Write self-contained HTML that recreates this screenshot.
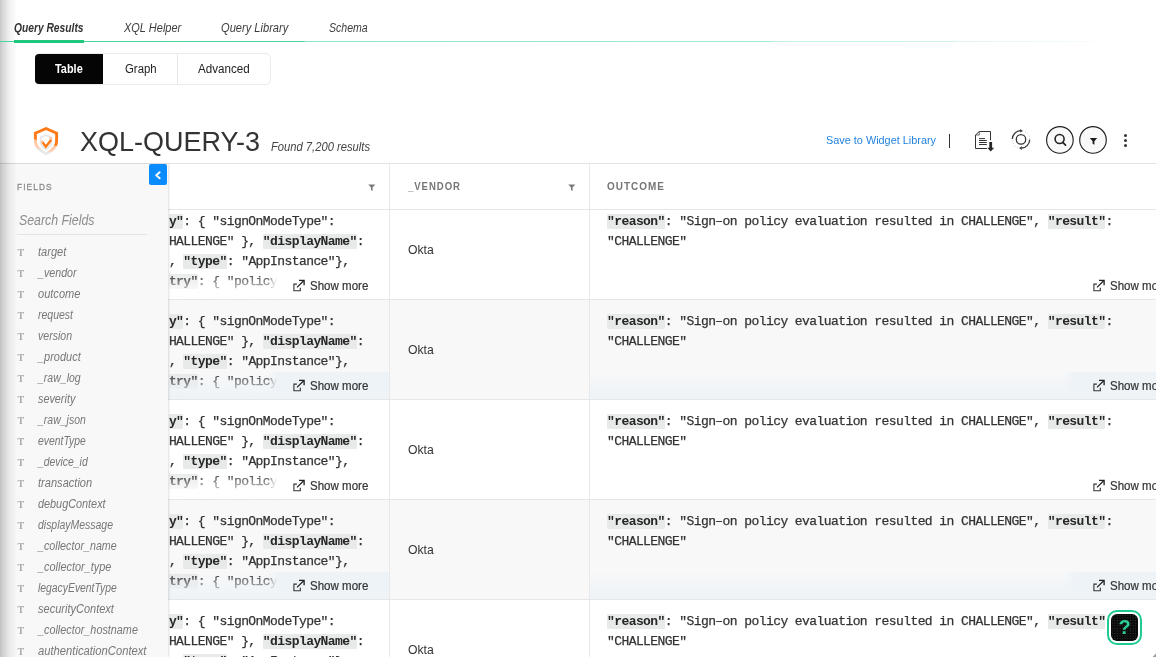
<!DOCTYPE html>
<html>
<head>
<meta charset="utf-8">
<title>XQL Query</title>
<style>
    *{box-sizing:border-box;margin:0;padding:0}
    html,body{width:1156px;height:657px;overflow:hidden;background:#fff;font-family:"Liberation Sans",sans-serif;color:#333}
    body{position:relative}
#wrap{left:0;top:0;width:1156px;height:657px;will-change:transform}
    .a{position:absolute}
    .x{display:inline-block;transform-origin:0 50%;white-space:nowrap}
    #edge{left:0;top:0;width:18px;height:657px;background:linear-gradient(to right,rgba(0,0,0,.225) 0,rgba(0,0,0,.20) 1px,rgba(0,0,0,.17) 2px,rgba(0,0,0,.14) 4px,rgba(0,0,0,.11) 6px,rgba(0,0,0,.07) 8px,rgba(0,0,0,.045) 11px,rgba(0,0,0,.025) 14px,rgba(0,0,0,0) 17px);z-index:50}
    .tab{top:20px;font-size:12px;font-style:italic;color:#3c3c3c;white-space:nowrap;line-height:16px}
    #tabline{left:0;top:41px;width:1115px;height:1px;background:linear-gradient(to right,#45d49b 0,#4fd7a1 304px,#8be7c4 306px,#a2ecd1 772px,#c4f2e2 774px,#cdf4e7 955px,#e0f8f0 957px,#f4fcf9 1080px,#fff 1115px);z-index:60}
    #tabactive{left:14px;top:40px;width:70px;height:3px;background:#1fc77f;z-index:61}
    #seg{left:35px;top:53px;width:236px;height:32px;border:1px solid #ebebeb;border-radius:5px;background:#fff}
    .segb{top:54px;height:30px;font-size:12px;line-height:30px;color:#222;white-space:nowrap}
    #title{left:80px;top:123.5px;font-size:28px;line-height:36px;color:#333;white-space:nowrap}
    #found{left:271px;top:139px;font-size:12px;font-style:italic;color:#444;white-space:nowrap;line-height:16px}
    #save{left:826px;top:131.6px;font-size:11px;color:#2383de;white-space:nowrap;line-height:16px}
    #hline{left:0;top:163px;width:1156px;height:1px;background:#e4e4e4}
    #side{left:0;top:164px;width:168px;height:493px;background:#f8f8f8;box-shadow:1px 0 2px rgba(0,0,0,.13);z-index:20}
    #tog{left:149px;top:164px;width:18px;height:21px;background:#0a8cff;border-radius:2px;z-index:25}
    #fields{left:17px;top:181.2px;font-size:9.5px;color:#8a8a8a;-webkit-text-stroke:0.3px #8a8a8a;line-height:12px;z-index:22;white-space:nowrap}
    #search{left:19px;top:211px;font-size:14px;font-style:italic;color:#8c8c8c;line-height:18px;z-index:22;white-space:nowrap}
    #sline{left:17px;top:234px;width:130px;height:1px;background:#e3e3e3;z-index:22}
    .f{left:38.2px;font-size:12px;font-style:italic;color:#777;line-height:14px;z-index:22;white-space:nowrap}
    .t{left:17.5px;font-family:"Liberation Serif",serif;font-size:10px;font-weight:bold;color:#a9a9a9;line-height:12px;z-index:22}
    .hdr{top:181px;font-size:10px;font-weight:bold;color:#767676;line-height:12px;white-space:nowrap}
    .vl{top:164px;width:1px;height:493px;background:#e9e9e9;z-index:9}
    .hl{left:168px;width:988px;height:1px;background:#e6e6e6;z-index:9}
    .rowbg{left:168px;width:988px;height:100px;background:#f8f8f9}
    
.mono{-webkit-text-stroke:0.25px #333;font-family:"Liberation Mono",monospace;font-size:13px;letter-spacing:-0.577px;line-height:20px;color:#333;white-space:pre;z-index:3}
    .mono b{-webkit-text-stroke:0;background:#e8e9e9;color:#262626;border-radius:1px;padding:0;box-decoration-break:clone}
    .fade{}
    .fade b{}
    .okta{left:407.5px;font-size:12px;color:#333;line-height:16px;white-space:nowrap}
    .sm{-webkit-text-stroke:0.2px #333;font-size:12px;color:#333;line-height:16px;white-space:nowrap;z-index:8}
    .ov{z-index:6}
    </style>
</head>
<body>
<div id="wrap" class="a">
<div id="edge" class="a"></div>
<div class="a tab" style="left:14px;font-weight:bold;color:#333"><span class="x" style="transform:scaleX(0.8541)">Query Results</span></div>
<div class="a tab" style="left:124px"><span class="x" style="transform:scaleX(0.9154)">XQL Helper</span></div>
<div class="a tab" style="left:221.4px"><span class="x" style="transform:scaleX(0.9257)">Query Library</span></div>
<div class="a tab" style="left:329.2px"><span class="x" style="transform:scaleX(0.8789)">Schema</span></div>
<div id="tabline" class="a"></div><div id="tabactive" class="a"></div>
<div id="seg" class="a"></div>
<div class="a" style="left:35px;top:54px;width:68px;height:30px;background:#050505;border-radius:4px 0 0 4px"></div>
<div class="a segb" style="left:55.3px;color:#fff;font-weight:bold"><span class="x" style="transform:scaleX(0.9096)">Table</span></div>
<div class="a segb" style="left:124.5px"><span class="x" style="transform:scaleX(0.9473)">Graph</span></div>
<div class="a" style="left:177px;top:54px;width:1px;height:30px;background:#e8e8e8"></div>
<div class="a segb" style="left:197.8px"><span class="x" style="transform:scaleX(0.9686)">Advanced</span></div>
<div id="title" class="a"><span class="x" style="transform:scaleX(0.9639)">XQL-QUERY-3</span></div>
<div id="found" class="a"><span class="x" style="transform:scaleX(0.9333)">Found 7,200 results</span></div>
<div id="save" class="a"><span class="x" style="transform:scaleX(0.9885)">Save to Widget Library</span></div>
<div class="a" style="left:949px;top:134px;width:1px;height:14px;background:#333"></div>
<svg class="a" style="left:30px;top:124px" width="34" height="34" viewBox="30 124 34 34"><defs><linearGradient id="sg" gradientUnits="userSpaceOnUse" x1="46" y1="127" x2="38.15" y2="152.6"><stop offset="0" stop-color="#ff7a17"/><stop offset="0.555" stop-color="#ff7a17"/><stop offset="0.575" stop-color="#ffc6a0"/><stop offset="0.83" stop-color="#ffcdb0"/><stop offset="0.86" stop-color="#e6e6e6"/><stop offset="1" stop-color="#ededed"/></linearGradient></defs><path d="M46 128.5 L56.6 133.1 V141.5 C56.6 146 51.5 151 46 154 C40.5 151 35.4 146 35.4 141.5 V133.1 Z" fill="#fff" stroke="url(#sg)" stroke-width="2.9" stroke-linejoin="miter"/><path d="M46 135.2 L51.4 137.4 V141.4 C51.4 145 48.8 147.8 46 149.4 C43.2 147.8 40.6 145 40.6 141.4 V137.4 Z" fill="none" stroke="#e6e6e6" stroke-width="1.6"/><rect x="49.4" y="137" width="2.6" height="3.2" fill="#ffc6a0"/><path d="M41.9 141.4 L45.8 146.7 L51.1 140" fill="none" stroke="#ff7a17" stroke-width="2.4"/><path d="M40.4 141.9 L42.3 139.9 L43.6 141.6 L41.8 143.4 Z" fill="#ffc6a0"/></svg>
<svg class="a" style="left:972px;top:128px" width="26" height="26" viewBox="972 128 26 26"><path d="M990.5 140.2 V131.5 H979.3 L975.5 135 V148.5 H987" fill="none" stroke="#333" stroke-width="1"/><path d="M979.3 131.5 V135 H975.5" fill="none" stroke="#333" stroke-width="0.7"/><path d="M979 138.6 H985 M979 140.5 H986.8 M979 142.5 H986.8 M979 144.5 H986.8" stroke="#333" stroke-width="1"/><path d="M989.3 142 H992.1 V147.8 H994.2 L990.7 151.5 L987.3 147.8 H989.3 Z" fill="#262626"/></svg>
<svg class="a" style="left:1008px;top:126px" width="26" height="26" viewBox="1008 126 26 26"><circle cx="1021" cy="139.4" r="4.7" fill="none" stroke="#333" stroke-width="1.3"/><circle cx="1021" cy="139.4" r="8.7" fill="none" stroke="#bdbdbd" stroke-width="0.9" stroke-dasharray="1 1.8"/><path d="M1012.3 139 A8.7 8.7 0 0 1 1020.6 130.7" fill="none" stroke="#333" stroke-width="1.2"/><path d="M1020.2 129 L1022.8 130.9 L1020.2 132.6 Z" fill="#333"/><path d="M1029.7 139.8 A8.7 8.7 0 0 1 1021.4 148.1" fill="none" stroke="#333" stroke-width="1.2"/><path d="M1021.8 146.2 L1019.2 148.1 L1021.8 149.9 Z" fill="#333"/></svg>
<svg class="a" style="left:1044px;top:124px" width="66" height="32" viewBox="1044 124 66 32"><circle cx="1059.9" cy="139.9" r="13.3" fill="#f9f9f9" stroke="#222" stroke-width="1.15"/><circle cx="1059.6" cy="139" r="4.5" fill="none" stroke="#222" stroke-width="1.6"/><path d="M1062.8 142.4 L1065.5 145.2" stroke="#222" stroke-width="1.7" stroke-linecap="round"/><circle cx="1093" cy="139.9" r="13.3" fill="#f9f9f9" stroke="#222" stroke-width="1.15"/><path d="M1089.8 137.9 H1097.2 L1094.4 141.2 V144.8 L1092.6 143.8 V141.2 Z" fill="#1c1c1c"/></svg>
<svg class="a" style="left:1122px;top:132px" width="8" height="16" viewBox="1122 132 8 16"><circle cx="1125.5" cy="135.6" r="1.5" fill="#333"/><circle cx="1125.5" cy="140.5" r="1.5" fill="#333"/><circle cx="1125.5" cy="145.5" r="1.5" fill="#333"/></svg>
<div id="hline" class="a"></div>
<div id="side" class="a"></div>
<div id="tog" class="a"><svg width="18" height="21" viewBox="0 0 18 21"><path d="M10.7 8.3 L7.2 11.3 L10.7 14.3" fill="none" stroke="#fff" stroke-width="1.9" stroke-linecap="round" stroke-linejoin="round"/></svg></div>
<div id="fields" class="a"><span class="x" style="transform:scaleX(0.8756);letter-spacing:1.25px">FIELDS</span></div>
<div id="search" class="a"><span class="x" style="transform:scaleX(0.8821)">Search Fields</span></div>
<div id="sline" class="a"></div>
<div class="a t" style="top:246.5px">T</div><div class="a f" style="top:245px"><span class="x" style="transform:scaleX(0.9222)">target</span></div>
<div class="a t" style="top:267.5px">T</div><div class="a f" style="top:266px"><span class="x" style="transform:scaleX(0.8899)">_vendor</span></div>
<div class="a t" style="top:288.5px">T</div><div class="a f" style="top:287px"><span class="x" style="transform:scaleX(0.9211)">outcome</span></div>
<div class="a t" style="top:309.5px">T</div><div class="a f" style="top:308px"><span class="x" style="transform:scaleX(0.8743)">request</span></div>
<div class="a t" style="top:330.5px">T</div><div class="a f" style="top:329px"><span class="x" style="transform:scaleX(0.8814)">version</span></div>
<div class="a t" style="top:351.5px">T</div><div class="a f" style="top:350px"><span class="x" style="transform:scaleX(0.9143)">_product</span></div>
<div class="a t" style="top:372.5px">T</div><div class="a f" style="top:371px"><span class="x" style="transform:scaleX(0.8767)">_raw_log</span></div>
<div class="a t" style="top:393.5px">T</div><div class="a f" style="top:392px"><span class="x" style="transform:scaleX(0.9022)">severity</span></div>
<div class="a t" style="top:414.5px">T</div><div class="a f" style="top:413px"><span class="x" style="transform:scaleX(0.8738)">_raw_json</span></div>
<div class="a t" style="top:435.5px">T</div><div class="a f" style="top:434px"><span class="x" style="transform:scaleX(0.8666)">eventType</span></div>
<div class="a t" style="top:456.5px">T</div><div class="a f" style="top:455px"><span class="x" style="transform:scaleX(0.8662)">_device_id</span></div>
<div class="a t" style="top:477.5px">T</div><div class="a f" style="top:476px"><span class="x" style="transform:scaleX(0.9233)">transaction</span></div>
<div class="a t" style="top:498.5px">T</div><div class="a f" style="top:497px"><span class="x" style="transform:scaleX(0.9045)">debugContext</span></div>
<div class="a t" style="top:519.5px">T</div><div class="a f" style="top:518px"><span class="x" style="transform:scaleX(0.8716)">displayMessage</span></div>
<div class="a t" style="top:540.5px">T</div><div class="a f" style="top:539px"><span class="x" style="transform:scaleX(0.8948)">_collector_name</span></div>
<div class="a t" style="top:561.5px">T</div><div class="a f" style="top:560px"><span class="x" style="transform:scaleX(0.9093)">_collector_type</span></div>
<div class="a t" style="top:582.5px">T</div><div class="a f" style="top:581px"><span class="x" style="transform:scaleX(0.8643)">legacyEventType</span></div>
<div class="a t" style="top:603.5px">T</div><div class="a f" style="top:602px"><span class="x" style="transform:scaleX(0.9177)">securityContext</span></div>
<div class="a t" style="top:624.5px">T</div><div class="a f" style="top:623px"><span class="x" style="transform:scaleX(0.9022)">_collector_hostname</span></div>
<div class="a t" style="top:645.5px">T</div><div class="a f" style="top:644px"><span class="x" style="transform:scaleX(0.9346)">authenticationContext</span></div>
<div class="a vl" style="left:389px"></div><div class="a vl" style="left:589px"></div>
<div class="a hdr" style="left:407.5px"><span class="x" style="transform:scaleX(0.9566);letter-spacing:1.0px">_VENDOR</span></div>
<div class="a hdr" style="left:607px"><span class="x" style="transform:scaleX(0.9946);letter-spacing:1.0px">OUTCOME</span></div>
<svg class="a" style="left:368px;top:184px" width="8" height="8" viewBox="0 0 8 8"><path d="M0.3 0.4 H7.3 L4.6 3.6 V6.9 L3 6.1 V3.6 Z" fill="#7b7b7b"/></svg>
<svg class="a" style="left:568px;top:184px" width="8" height="8" viewBox="0 0 8 8"><path d="M0.3 0.4 H7.3 L4.6 3.6 V6.9 L3 6.1 V3.6 Z" fill="#7b7b7b"/></svg>
<div class="a hl" style="top:209px"></div>
<div class="a" style="left:168px;top:210px;width:221px;height:89px;overflow:hidden;z-index:3"><div class="a mono" style="left:0.9px;top:1.5px"><b>y"</b>: { "signOnModeType":
HALLENGE" }, <b>"displayName"</b>:
, <b>"type"</b>: "AppInstance"},
<b>try"</b>: { "policyEvaluation"
"FactorMode": "1FA",</div></div>
<div class="a okta" style="top:241.5px"><span class="x" style="transform:scaleX(1.018)">Okta</span></div>
<div class="a mono" style="left:607px;top:211.5px"><b>"reason"</b>: "Sign–on policy evaluation resulted in CHALLENGE", <b>"result"</b>:
"CHALLENGE"</div>
<div class="a ov" style="left:168px;top:272px;width:221px;height:27px;background:linear-gradient(to bottom,rgba(255,255,255,0) 0,rgba(255,255,255,1) 25px)"></div>
<div class="a ov" style="left:590px;top:272px;width:566px;height:27px;background:linear-gradient(to bottom,rgba(255,255,255,0) 0,rgba(255,255,255,1) 25px)"></div>
<div class="a ov" style="left:268.3px;top:272px;width:120.7px;height:27px;background:linear-gradient(to right,rgba(255,255,255,0) 0,rgba(255,255,255,1) 9px)"></div>
<div class="a ov" style="left:1064px;top:272px;width:92px;height:27px;background:linear-gradient(to right,rgba(255,255,255,0) 0,rgba(255,255,255,1) 11px)"></div>
<div class="a sm" style="left:293px;top:277.5px;width:100px"><svg width="13" height="13" viewBox="0 0 13 13" style="position:absolute;left:0;top:1px"><path d="M3.9 5.1 H0.9 V11.7 H7.3 V8.7" fill="none" stroke="#333" stroke-width="1.1"/><path d="M4 8.4 L10.9 1.5" fill="none" stroke="#222" stroke-width="1.3"/><path d="M6 1.4 H11.1 V6.2" fill="none" stroke="#222" stroke-width="1.3"/></svg><span style="position:absolute;left:17.1px;top:0"><span class="x" style="transform:scaleX(0.9604)">Show more</span></span></div>
<div class="a sm" style="left:1093.2px;top:277.5px;width:100px"><svg width="13" height="13" viewBox="0 0 13 13" style="position:absolute;left:0;top:1px"><path d="M3.9 5.1 H0.9 V11.7 H7.3 V8.7" fill="none" stroke="#333" stroke-width="1.1"/><path d="M4 8.4 L10.9 1.5" fill="none" stroke="#222" stroke-width="1.3"/><path d="M6 1.4 H11.1 V6.2" fill="none" stroke="#222" stroke-width="1.3"/></svg><span style="position:absolute;left:17.1px;top:0"><span class="x" style="transform:scaleX(0.9604)">Show more</span></span></div>
<div class="a hl" style="top:299px"></div>
<div class="a rowbg" style="top:300px;height:99px"></div>
<div class="a" style="left:168px;top:310px;width:221px;height:89px;overflow:hidden;z-index:3"><div class="a mono" style="left:0.9px;top:1.5px"><b>y"</b>: { "signOnModeType":
HALLENGE" }, <b>"displayName"</b>:
, <b>"type"</b>: "AppInstance"},
<b>try"</b>: { "policyEvaluation"
"FactorMode": "1FA",</div></div>
<div class="a okta" style="top:341.5px"><span class="x" style="transform:scaleX(1.018)">Okta</span></div>
<div class="a mono" style="left:607px;top:311.5px"><b>"reason"</b>: "Sign–on policy evaluation resulted in CHALLENGE", <b>"result"</b>:
"CHALLENGE"</div>
<div class="a ov" style="left:168px;top:372px;width:221px;height:27px;background:linear-gradient(to bottom,rgba(238,243,247,0) 0,rgba(238,243,247,1) 25px)"></div>
<div class="a ov" style="left:590px;top:372px;width:566px;height:27px;background:linear-gradient(to bottom,rgba(238,243,247,0) 0,rgba(238,243,247,1) 25px)"></div>
<div class="a ov" style="left:268.3px;top:372px;width:120.7px;height:27px;background:linear-gradient(to right,rgba(238,243,247,0) 0,rgba(238,243,247,1) 9px)"></div>
<div class="a ov" style="left:1064px;top:372px;width:92px;height:27px;background:linear-gradient(to right,rgba(238,243,247,0) 0,rgba(238,243,247,1) 11px)"></div>
<div class="a sm" style="left:293px;top:377.5px;width:100px"><svg width="13" height="13" viewBox="0 0 13 13" style="position:absolute;left:0;top:1px"><path d="M3.9 5.1 H0.9 V11.7 H7.3 V8.7" fill="none" stroke="#333" stroke-width="1.1"/><path d="M4 8.4 L10.9 1.5" fill="none" stroke="#222" stroke-width="1.3"/><path d="M6 1.4 H11.1 V6.2" fill="none" stroke="#222" stroke-width="1.3"/></svg><span style="position:absolute;left:17.1px;top:0"><span class="x" style="transform:scaleX(0.9604)">Show more</span></span></div>
<div class="a sm" style="left:1093.2px;top:377.5px;width:100px"><svg width="13" height="13" viewBox="0 0 13 13" style="position:absolute;left:0;top:1px"><path d="M3.9 5.1 H0.9 V11.7 H7.3 V8.7" fill="none" stroke="#333" stroke-width="1.1"/><path d="M4 8.4 L10.9 1.5" fill="none" stroke="#222" stroke-width="1.3"/><path d="M6 1.4 H11.1 V6.2" fill="none" stroke="#222" stroke-width="1.3"/></svg><span style="position:absolute;left:17.1px;top:0"><span class="x" style="transform:scaleX(0.9604)">Show more</span></span></div>
<div class="a hl" style="top:399px"></div>
<div class="a" style="left:168px;top:410px;width:221px;height:89px;overflow:hidden;z-index:3"><div class="a mono" style="left:0.9px;top:1.5px"><b>y"</b>: { "signOnModeType":
HALLENGE" }, <b>"displayName"</b>:
, <b>"type"</b>: "AppInstance"},
<b>try"</b>: { "policyEvaluation"
"FactorMode": "1FA",</div></div>
<div class="a okta" style="top:441.5px"><span class="x" style="transform:scaleX(1.018)">Okta</span></div>
<div class="a mono" style="left:607px;top:411.5px"><b>"reason"</b>: "Sign–on policy evaluation resulted in CHALLENGE", <b>"result"</b>:
"CHALLENGE"</div>
<div class="a ov" style="left:168px;top:472px;width:221px;height:27px;background:linear-gradient(to bottom,rgba(255,255,255,0) 0,rgba(255,255,255,1) 25px)"></div>
<div class="a ov" style="left:590px;top:472px;width:566px;height:27px;background:linear-gradient(to bottom,rgba(255,255,255,0) 0,rgba(255,255,255,1) 25px)"></div>
<div class="a ov" style="left:268.3px;top:472px;width:120.7px;height:27px;background:linear-gradient(to right,rgba(255,255,255,0) 0,rgba(255,255,255,1) 9px)"></div>
<div class="a ov" style="left:1064px;top:472px;width:92px;height:27px;background:linear-gradient(to right,rgba(255,255,255,0) 0,rgba(255,255,255,1) 11px)"></div>
<div class="a sm" style="left:293px;top:477.5px;width:100px"><svg width="13" height="13" viewBox="0 0 13 13" style="position:absolute;left:0;top:1px"><path d="M3.9 5.1 H0.9 V11.7 H7.3 V8.7" fill="none" stroke="#333" stroke-width="1.1"/><path d="M4 8.4 L10.9 1.5" fill="none" stroke="#222" stroke-width="1.3"/><path d="M6 1.4 H11.1 V6.2" fill="none" stroke="#222" stroke-width="1.3"/></svg><span style="position:absolute;left:17.1px;top:0"><span class="x" style="transform:scaleX(0.9604)">Show more</span></span></div>
<div class="a sm" style="left:1093.2px;top:477.5px;width:100px"><svg width="13" height="13" viewBox="0 0 13 13" style="position:absolute;left:0;top:1px"><path d="M3.9 5.1 H0.9 V11.7 H7.3 V8.7" fill="none" stroke="#333" stroke-width="1.1"/><path d="M4 8.4 L10.9 1.5" fill="none" stroke="#222" stroke-width="1.3"/><path d="M6 1.4 H11.1 V6.2" fill="none" stroke="#222" stroke-width="1.3"/></svg><span style="position:absolute;left:17.1px;top:0"><span class="x" style="transform:scaleX(0.9604)">Show more</span></span></div>
<div class="a hl" style="top:499px"></div>
<div class="a rowbg" style="top:500px;height:99px"></div>
<div class="a" style="left:168px;top:510px;width:221px;height:89px;overflow:hidden;z-index:3"><div class="a mono" style="left:0.9px;top:1.5px"><b>y"</b>: { "signOnModeType":
HALLENGE" }, <b>"displayName"</b>:
, <b>"type"</b>: "AppInstance"},
<b>try"</b>: { "policyEvaluation"
"FactorMode": "1FA",</div></div>
<div class="a okta" style="top:541.5px"><span class="x" style="transform:scaleX(1.018)">Okta</span></div>
<div class="a mono" style="left:607px;top:511.5px"><b>"reason"</b>: "Sign–on policy evaluation resulted in CHALLENGE", <b>"result"</b>:
"CHALLENGE"</div>
<div class="a ov" style="left:168px;top:572px;width:221px;height:27px;background:linear-gradient(to bottom,rgba(238,243,247,0) 0,rgba(238,243,247,1) 25px)"></div>
<div class="a ov" style="left:590px;top:572px;width:566px;height:27px;background:linear-gradient(to bottom,rgba(238,243,247,0) 0,rgba(238,243,247,1) 25px)"></div>
<div class="a ov" style="left:268.3px;top:572px;width:120.7px;height:27px;background:linear-gradient(to right,rgba(238,243,247,0) 0,rgba(238,243,247,1) 9px)"></div>
<div class="a ov" style="left:1064px;top:572px;width:92px;height:27px;background:linear-gradient(to right,rgba(238,243,247,0) 0,rgba(238,243,247,1) 11px)"></div>
<div class="a sm" style="left:293px;top:577.5px;width:100px"><svg width="13" height="13" viewBox="0 0 13 13" style="position:absolute;left:0;top:1px"><path d="M3.9 5.1 H0.9 V11.7 H7.3 V8.7" fill="none" stroke="#333" stroke-width="1.1"/><path d="M4 8.4 L10.9 1.5" fill="none" stroke="#222" stroke-width="1.3"/><path d="M6 1.4 H11.1 V6.2" fill="none" stroke="#222" stroke-width="1.3"/></svg><span style="position:absolute;left:17.1px;top:0"><span class="x" style="transform:scaleX(0.9604)">Show more</span></span></div>
<div class="a sm" style="left:1093.2px;top:577.5px;width:100px"><svg width="13" height="13" viewBox="0 0 13 13" style="position:absolute;left:0;top:1px"><path d="M3.9 5.1 H0.9 V11.7 H7.3 V8.7" fill="none" stroke="#333" stroke-width="1.1"/><path d="M4 8.4 L10.9 1.5" fill="none" stroke="#222" stroke-width="1.3"/><path d="M6 1.4 H11.1 V6.2" fill="none" stroke="#222" stroke-width="1.3"/></svg><span style="position:absolute;left:17.1px;top:0"><span class="x" style="transform:scaleX(0.9604)">Show more</span></span></div>
<div class="a hl" style="top:599px"></div>
<div class="a" style="left:168px;top:610px;width:221px;height:89px;overflow:hidden;z-index:3"><div class="a mono" style="left:0.9px;top:1.5px"><b>y"</b>: { "signOnModeType":
HALLENGE" }, <b>"displayName"</b>:
, <b>"type"</b>: "AppInstance"},
<b>try"</b>: { "policyEvaluation"
"FactorMode": "1FA",</div></div>
<div class="a okta" style="top:641.5px"><span class="x" style="transform:scaleX(1.018)">Okta</span></div>
<div class="a mono" style="left:607px;top:611.5px"><b>"reason"</b>: "Sign–on policy evaluation resulted in CHALLENGE", <b>"result"</b>:
"CHALLENGE"</div>
<div class="a ov" style="left:168px;top:672px;width:221px;height:27px;background:linear-gradient(to bottom,rgba(255,255,255,0) 0,rgba(255,255,255,1) 25px)"></div>
<div class="a ov" style="left:590px;top:672px;width:566px;height:27px;background:linear-gradient(to bottom,rgba(255,255,255,0) 0,rgba(255,255,255,1) 25px)"></div>
<div class="a ov" style="left:268.3px;top:672px;width:120.7px;height:27px;background:linear-gradient(to right,rgba(255,255,255,0) 0,rgba(255,255,255,1) 9px)"></div>
<div class="a ov" style="left:1064px;top:672px;width:92px;height:27px;background:linear-gradient(to right,rgba(255,255,255,0) 0,rgba(255,255,255,1) 11px)"></div>
<div class="a sm" style="left:293px;top:677.5px;width:100px"><svg width="13" height="13" viewBox="0 0 13 13" style="position:absolute;left:0;top:1px"><path d="M3.9 5.1 H0.9 V11.7 H7.3 V8.7" fill="none" stroke="#333" stroke-width="1.1"/><path d="M4 8.4 L10.9 1.5" fill="none" stroke="#222" stroke-width="1.3"/><path d="M6 1.4 H11.1 V6.2" fill="none" stroke="#222" stroke-width="1.3"/></svg><span style="position:absolute;left:17.1px;top:0"><span class="x" style="transform:scaleX(0.9604)">Show more</span></span></div>
<div class="a sm" style="left:1093.2px;top:677.5px;width:100px"><svg width="13" height="13" viewBox="0 0 13 13" style="position:absolute;left:0;top:1px"><path d="M3.9 5.1 H0.9 V11.7 H7.3 V8.7" fill="none" stroke="#333" stroke-width="1.1"/><path d="M4 8.4 L10.9 1.5" fill="none" stroke="#222" stroke-width="1.3"/><path d="M6 1.4 H11.1 V6.2" fill="none" stroke="#222" stroke-width="1.3"/></svg><span style="position:absolute;left:17.1px;top:0"><span class="x" style="transform:scaleX(0.9604)">Show more</span></span></div>
<div class="a hl" style="top:699px"></div>
<div class="a" style="left:1107px;top:610px;width:35px;height:35px;border:2px solid #1fcb8d;border-radius:10px;background:#fff;z-index:40"></div>
<div class="a" style="left:1110.6px;top:613.6px;width:27.8px;height:27.8px;border-radius:6px;background:#0a0a0a;z-index:41;background-image:radial-gradient(circle,#3a3a3a 0.5px,rgba(0,0,0,0) 0.8px);background-size:2.6px 2.6px"></div>
<div class="a" style="left:1110.6px;top:613.6px;width:27.8px;height:27.8px;z-index:42;text-align:center;font-size:20px;font-weight:bold;line-height:27px;color:#2bcf97">?</div>
<svg class="a" style="left:1150px;top:651px;z-index:45" width="6" height="6" viewBox="0 0 6 6"><path d="M6 2.6 V6 H2.6 Z" fill="#9a9a9a"/></svg>
</div>
</body>
</html>
